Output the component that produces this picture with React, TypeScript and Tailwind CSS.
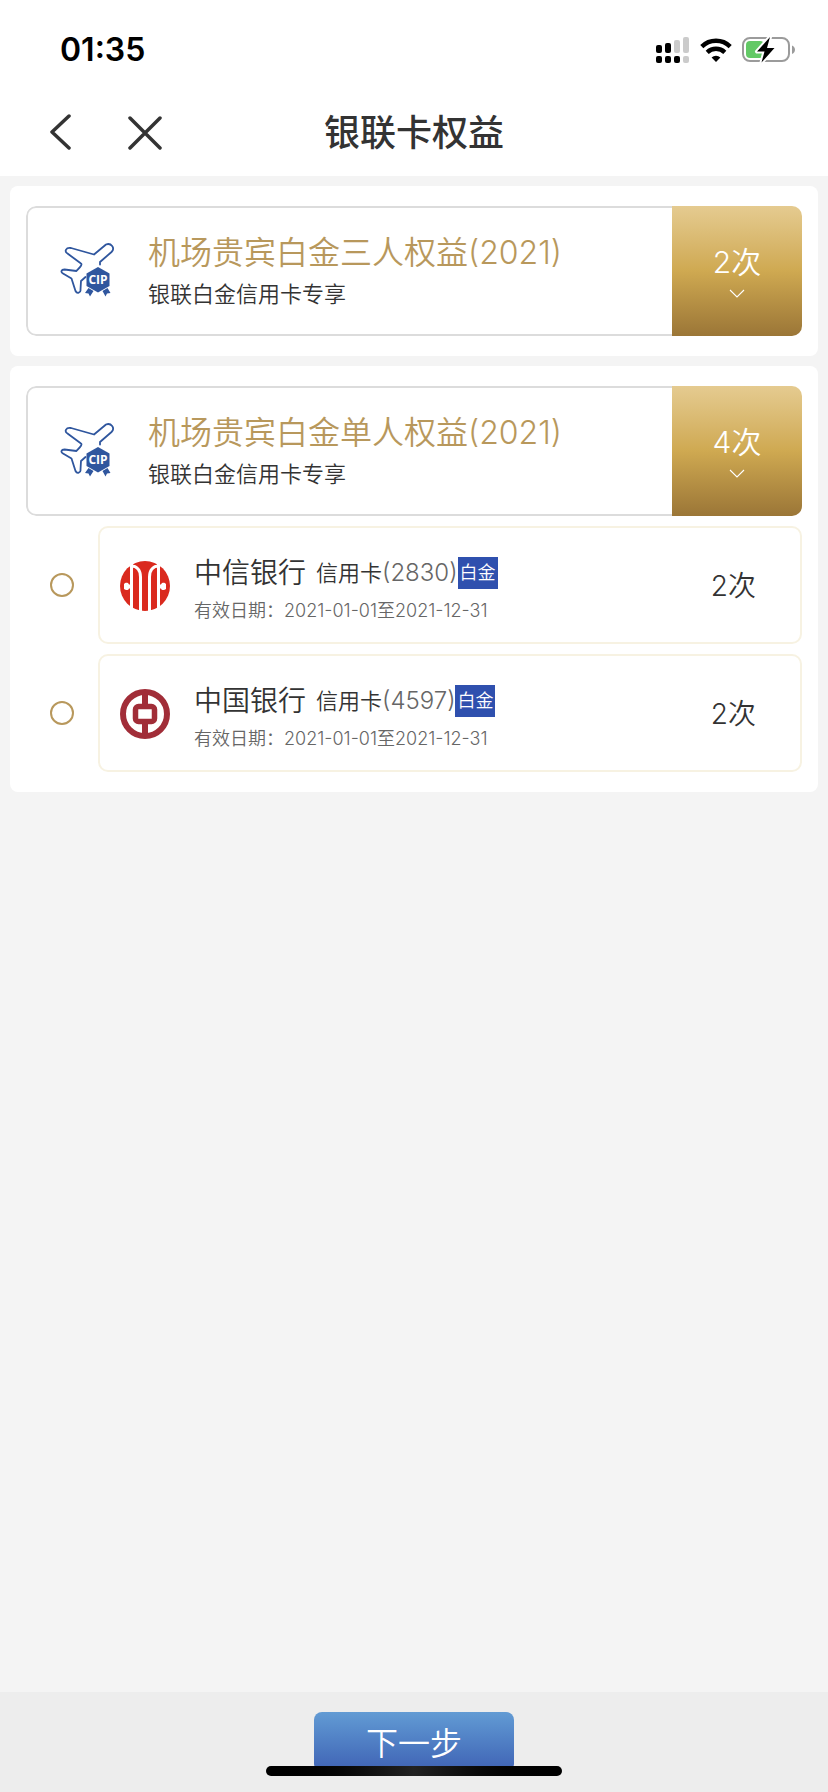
const benefits = [
  { id: "three", title: "机场贵宾白金三人权益(2021)", times: 2, cards: [] },
  {
    id: "single",
    title: "机场贵宾白金单人权益(2021)",
    times: 4,
    cards: [
      { id: "2830", bank: "中信银行", times: 2, Logo: CiticLogo },
      { id: "4597", bank: "中国银行", times: 2, Logo: BocLogo },
    ],
  },
];

function SignalIcon() {
  return (
    <svg width="34" height="28" viewBox="0 0 34 28" aria-hidden="true">
      <g fill="#000">
        <rect x="0" y="9" width="6" height="8" rx="2" />
        <rect x="9" y="7" width="6" height="10" rx="2" />
        <rect x="0" y="20" width="6" height="7" rx="2" />
        <rect x="9" y="20" width="6" height="7" rx="2" />
        <rect x="18" y="20" width="6" height="7" rx="2" />
      </g>
      <g fill="#cbcbcb">
        <rect x="18" y="4" width="6" height="13" rx="2" />
        <rect x="27" y="1" width="6" height="16" rx="2" />
        <rect x="27" y="20" width="6" height="7" rx="2" />
      </g>
    </svg>
  );
}

function WifiIcon() {
  return (
    <svg width="32" height="26" viewBox="0 0 32 26" aria-hidden="true">
      <g fill="none" stroke="#000" strokeWidth="4.4">
        <path d="M1.8 9.6a20.2 20.2 0 0 1 28.4 0" />
        <path d="M7.2 15.4a12.6 12.6 0 0 1 17.6 0" />
      </g>
      <path d="M16 25l-4.4-4.5a6.4 6.4 0 0 1 8.8 0z" fill="#000" />
    </svg>
  );
}

function BatteryIcon() {
  return (
    <svg width="54" height="28" viewBox="0 0 54 28" aria-hidden="true">
      <rect x="1" y="2" width="46" height="23" rx="7" fill="none" stroke="#9b9b9b" strokeWidth="2" />
      <path d="M50 9.5c4 1.5 4 7 0 8.5z" fill="#9b9b9b" />
      <rect x="4" y="5" width="18" height="17" rx="4" fill="#63c966" />
      <path
        d="M28 1L15 15.5h7.5L19.5 26.5 32.5 12h-7.5z"
        fill="#000"
        stroke="#fff"
        strokeWidth="4"
        paintOrder="stroke"
        strokeLinejoin="round"
      />
    </svg>
  );
}

function PlaneIcon() {
  return (
    <svg className="shrink-0" width="56" height="56" viewBox="0 0 56 56" aria-hidden="true">
      <path
        d="M40 21.5v-2.5L51.5 9c4-4-.5-9.5-5.5-7.5L34 11.5 11 5C6 4 4 8.5 7.5 10.5L21 20.5c1.5 1-.5 3-4.5 7.5L4.5 26.5C1 26.5.5 29 3 30.5l8.5 5L15.5 48c1.5 3 5.5 2 5-1.5L21 38l4.5-4"
        fill="none"
        stroke="#2f569e"
        strokeWidth="1.8"
        strokeLinecap="round"
        strokeLinejoin="round"
      />
      <path d="M38 24l11.5 6.5v12.5L38 49.5 26.5 43V30.5z" fill="#2f569e" />
      <path
        d="M28.5 45l5 3-3.5 5.5-1.5-3-3.5-.5zM47.5 45l-5 3 3 5.5 1.5-3 3.5-.5z"
        fill="#2f569e"
      />
      <text
        x="38"
        y="41"
        textAnchor="middle"
        fill="#fff"
        fontFamily="Open Sans, sans-serif"
        fontSize="12"
        fontWeight="700"
      >
        CIP
      </text>
    </svg>
  );
}

function CiticLogo() {
  return (
    <svg className="shrink-0" width="50" height="50" viewBox="0 0 50 50" aria-hidden="true">
      <circle cx="25" cy="25" r="25" fill="#da2a1e" />
      <g fill="none" stroke="#fff" strokeWidth="3">
        <path d="M11.5 3v46M38.5 3v46" />
        <path d="M11 5c6 0 9.5 4 9.5 11v35M39 5c-6 0-9.5 4-9.5 11v35" />
      </g>
      <path
        d="M11 23.5H9C8.5 21.5 5.5 21 4 23v5c1.5 1.5 4.5 1.5 5-.5h2zM39 23.5h2c.5-2 3.5-2.5 5-.5v5c-1.5 1.5-4.5 1.5-5-.5h-2z"
        fill="#fff"
      />
    </svg>
  );
}

function BocLogo() {
  return (
    <svg className="shrink-0" width="50" height="50" viewBox="0 0 50 50" aria-hidden="true">
      <g fill="none" stroke="#a12d38">
        <circle cx="25" cy="25" r="22" strokeWidth="6" />
        <rect x="15.5" y="17.5" width="19" height="15" rx="3" strokeWidth="5.5" />
        <path d="M25 3v12M25 35v12" strokeWidth="6" />
      </g>
    </svg>
  );
}

export default function App() {
  return (
    <div className="flex min-h-screen flex-col bg-[#f4f4f4] font-['Inter','Noto_Sans_CJK_SC',sans-serif] font-[350] text-[#333]">
      <header className="bg-white">
        <div className="flex h-[100px] items-center justify-between pr-8 pl-[60px]">
          <span className="text-[32px] leading-10 font-semibold text-black">01:35</span>
          <div className="flex items-center gap-[10px]">
            <SignalIcon />
            <WifiIcon />
            <BatteryIcon />
          </div>
        </div>
        <div className="grid h-[76px] grid-cols-[1fr_auto_1fr] items-center pb-[10px]">
          <div className="flex items-center gap-10 pl-10">
            <button type="button" aria-label="返回" className="flex h-12 w-10 items-center justify-center">
              <svg width="22" height="38" viewBox="0 0 22 38" aria-hidden="true">
                <path
                  d="M20 2L3 18l17 16"
                  fill="none"
                  stroke="#333"
                  strokeWidth="3.5"
                  strokeLinecap="round"
                  strokeLinejoin="round"
                />
              </svg>
            </button>
            <button type="button" aria-label="关闭" className="flex h-12 w-12 items-center justify-center">
              <svg width="36" height="36" viewBox="0 0 36 36" aria-hidden="true">
                <path
                  d="M4 3l30 30M34 3L4 33"
                  fill="none"
                  stroke="#333"
                  strokeWidth="3.5"
                  strokeLinecap="round"
                />
              </svg>
            </button>
          </div>
          <h1 className="text-4xl leading-[48px] font-medium">银联卡权益</h1>
        </div>
      </header>

      <main className="flex flex-1 flex-col gap-[10px] p-[10px]">
        {benefits.map(({ id, title, times, cards }) => (
          <section key={id} className="flex flex-col gap-[10px] rounded-lg bg-white px-4 py-5">
            <button
              type="button"
              className="flex h-[130px] overflow-hidden rounded-[10px] text-left"
            >
              <span className="flex h-full flex-1 items-center gap-8 rounded-l-[10px] border-2 border-r-0 border-[#dcdcdc] pl-8">
                <PlaneIcon />
                <span className="flex flex-col">
                  <span className="text-[32px] leading-[46px] text-[#b8985c]">{title}</span>
                  <span className="text-[22px] leading-9">银联白金信用卡专享</span>
                </span>
              </span>
              <span className="flex h-full w-[130px] flex-col items-center justify-center bg-linear-to-b from-[#e5cb90] via-[#cfa951] to-[#9b7637] pt-[2px] text-white">
                <span className="text-[30px] leading-10">{times}次</span>
                <svg width="16" height="20" viewBox="0 0 16 20" aria-hidden="true">
                  <path d="M1 8l7 7 7-7" fill="none" stroke="#fff" strokeWidth="1.1" />
                </svg>
              </span>
            </button>

            {cards.map(({ id: number, bank, times: left, Logo }) => (
              <label key={number} className="flex items-center pl-6">
                <input
                  type="radio"
                  name="card"
                  value={number}
                  className="mr-6 h-6 w-6 shrink-0 appearance-none rounded-full border-2 border-[#b8985c] checked:bg-[#b8985c]"
                />
                <span className="flex h-[118px] flex-1 items-center rounded-[10px] border-2 border-[#f7f2e2] pt-[2px] pr-11 pl-5">
                  <Logo />
                  <span className="ml-6 flex flex-1 flex-col gap-[2px] pt-2">
                    <span className="flex items-center">
                      <span className="mr-[10px] text-[28px] leading-10">{bank}</span>
                      <span className="text-[22px] leading-8">信用卡</span>
                      <span className="text-2xl leading-8 text-[#666]">({number})</span>
                      <span className="bg-[#2f50ae] px-[2px] text-lg leading-8 text-white">白金</span>
                    </span>
                    <span className="text-lg leading-8 text-[#666]">
                      有效日期：2021-01-01至2021-12-31
                    </span>
                  </span>
                  <span className="text-[28px] leading-10">{left}次</span>
                </span>
              </label>
            ))}
          </section>
        ))}
      </main>

      <footer className="sticky bottom-0 flex h-[100px] justify-center bg-[#ededed] pt-5">
        <button
          type="button"
          className="h-[60px] w-[200px] rounded-lg bg-linear-to-b from-[#629bd4] to-[#3f62b4] pt-1 text-[32px] text-white"
        >
          下一步
        </button>
        <div className="absolute bottom-4 left-1/2 h-[10px] w-[296px] -translate-x-1/2 rounded-full bg-linear-to-r from-black via-[#222] to-black" />
      </footer>
    </div>
  );
}
